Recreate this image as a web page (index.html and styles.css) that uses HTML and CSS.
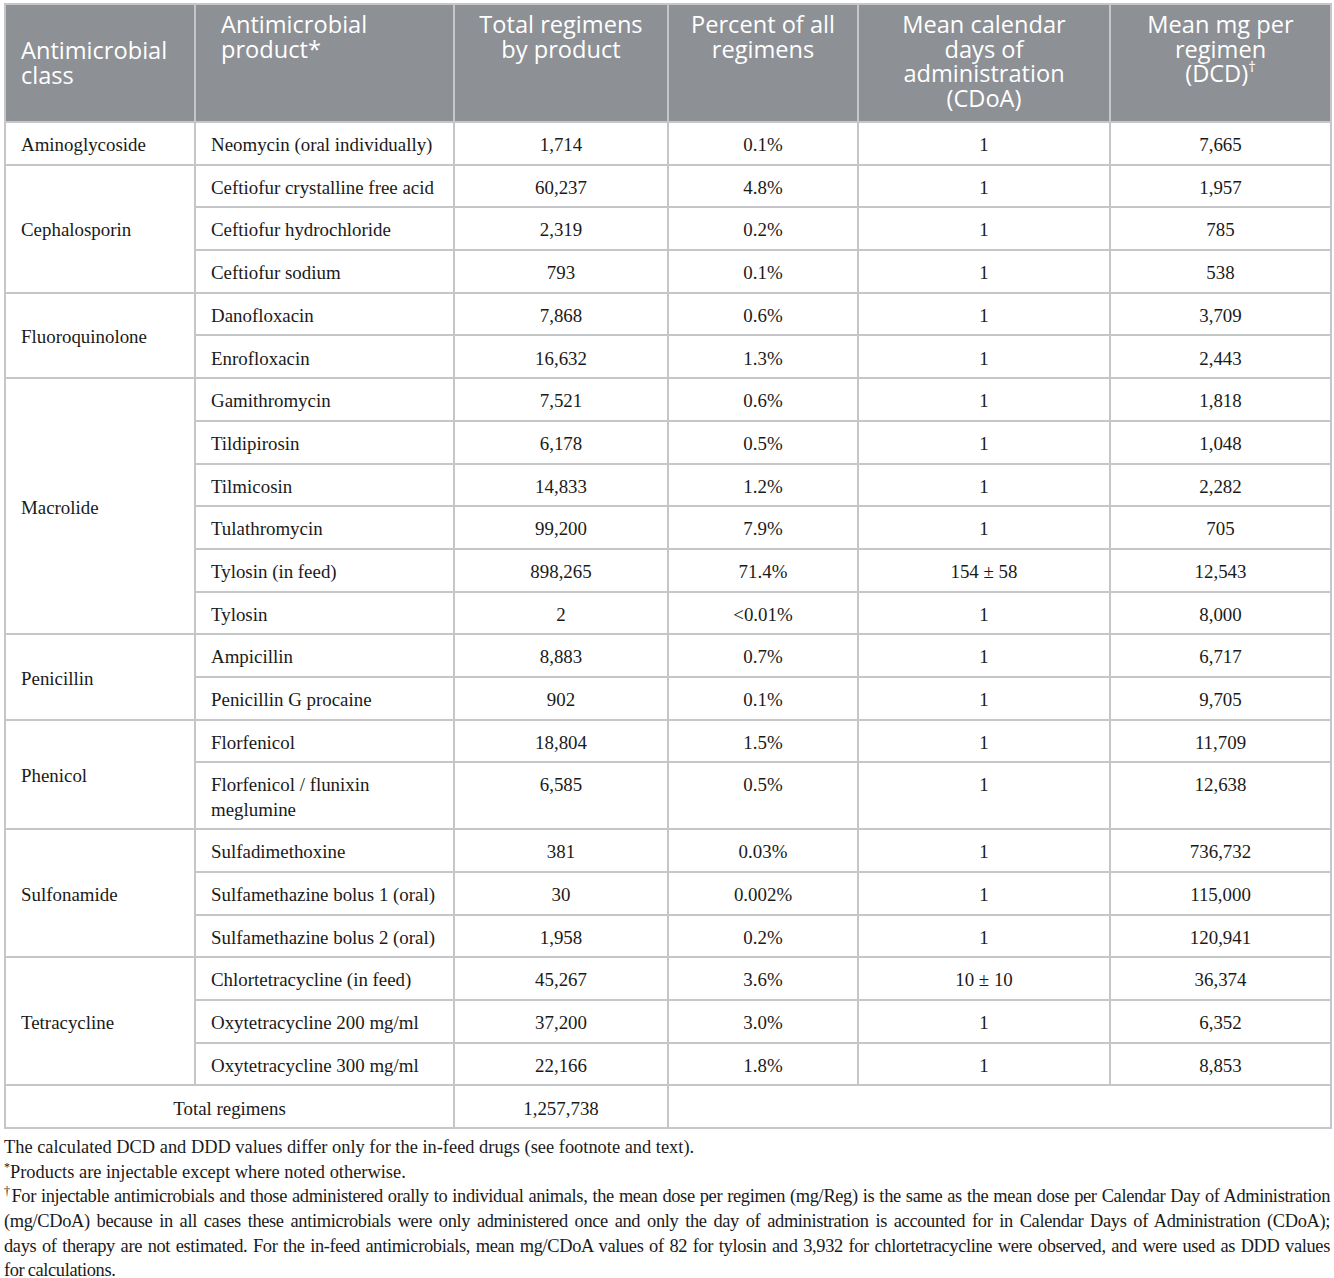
FILE: index.html
```html
<!DOCTYPE html>
<html>
<head>
<meta charset="utf-8">
<link rel="stylesheet" href="styles.css">
</head>
<body>
<div class="wrap">
<table class="tbl">
  <colgroup>
    <col class="c1"><col class="c2"><col class="c3"><col class="c4"><col class="c5"><col class="c6">
  </colgroup>
  <thead>
    <tr>
      <th class="left mid">Antimicrobial<br>class</th>
      <th class="left prodh">Antimicrobial<br>product*</th>
      <th>Total regimens<br>by product</th>
      <th>Percent of all<br>regimens</th>
      <th>Mean calendar<br>days of<br>administration<br>(CDoA)</th>
      <th>Mean mg per<br>regimen<br>(DCD)<sup>†</sup></th>
    </tr>
  </thead>
  <tbody>
    <tr><td class="cls">Aminoglycoside</td><td class="prod">Neomycin (oral individually)</td><td>1,714</td><td>0.1%</td><td>1</td><td>7,665</td></tr>

    <tr><td class="cls" rowspan="3">Cephalosporin</td><td class="prod">Ceftiofur crystalline free acid</td><td>60,237</td><td>4.8%</td><td>1</td><td>1,957</td></tr>
    <tr><td class="prod">Ceftiofur hydrochloride</td><td>2,319</td><td>0.2%</td><td>1</td><td>785</td></tr>
    <tr><td class="prod">Ceftiofur sodium</td><td>793</td><td>0.1%</td><td>1</td><td>538</td></tr>

    <tr><td class="cls" rowspan="2">Fluoroquinolone</td><td class="prod">Danofloxacin</td><td>7,868</td><td>0.6%</td><td>1</td><td>3,709</td></tr>
    <tr><td class="prod">Enrofloxacin</td><td>16,632</td><td>1.3%</td><td>1</td><td>2,443</td></tr>

    <tr><td class="cls" rowspan="6">Macrolide</td><td class="prod">Gamithromycin</td><td>7,521</td><td>0.6%</td><td>1</td><td>1,818</td></tr>
    <tr><td class="prod">Tildipirosin</td><td>6,178</td><td>0.5%</td><td>1</td><td>1,048</td></tr>
    <tr><td class="prod">Tilmicosin</td><td>14,833</td><td>1.2%</td><td>1</td><td>2,282</td></tr>
    <tr><td class="prod">Tulathromycin</td><td>99,200</td><td>7.9%</td><td>1</td><td>705</td></tr>
    <tr><td class="prod">Tylosin (in feed)</td><td>898,265</td><td>71.4%</td><td>154 ± 58</td><td>12,543</td></tr>
    <tr><td class="prod">Tylosin</td><td>2</td><td>&lt;0.01%</td><td>1</td><td>8,000</td></tr>

    <tr><td class="cls" rowspan="2">Penicillin</td><td class="prod">Ampicillin</td><td>8,883</td><td>0.7%</td><td>1</td><td>6,717</td></tr>
    <tr><td class="prod">Penicillin G procaine</td><td>902</td><td>0.1%</td><td>1</td><td>9,705</td></tr>

    <tr><td class="cls" rowspan="2">Phenicol</td><td class="prod">Florfenicol</td><td>18,804</td><td>1.5%</td><td>1</td><td>11,709</td></tr>
    <tr><td class="prod top">Florfenicol / flunixin<br>meglumine</td><td class="top">6,585</td><td class="top">0.5%</td><td class="top">1</td><td class="top">12,638</td></tr>

    <tr><td class="cls" rowspan="3">Sulfonamide</td><td class="prod">Sulfadimethoxine</td><td>381</td><td>0.03%</td><td>1</td><td>736,732</td></tr>
    <tr><td class="prod">Sulfamethazine bolus 1 (oral)</td><td>30</td><td>0.002%</td><td>1</td><td>115,000</td></tr>
    <tr><td class="prod">Sulfamethazine bolus 2 (oral)</td><td>1,958</td><td>0.2%</td><td>1</td><td>120,941</td></tr>

    <tr><td class="cls" rowspan="3">Tetracycline</td><td class="prod">Chlortetracycline (in feed)</td><td>45,267</td><td>3.6%</td><td>10 ± 10</td><td>36,374</td></tr>
    <tr><td class="prod">Oxytetracycline 200 mg/ml</td><td>37,200</td><td>3.0%</td><td>1</td><td>6,352</td></tr>
    <tr><td class="prod">Oxytetracycline 300 mg/ml</td><td>22,166</td><td>1.8%</td><td>1</td><td>8,853</td></tr>

    <tr><td colspan="2">Total regimens</td><td>1,257,738</td><td colspan="3"></td></tr>
  </tbody>
</table>
<div class="notes">
  <p>The calculated DCD and DDD values differ only for the in-feed drugs (see footnote and text).</p>
  <p><sup>*</sup>Products are injectable except where noted otherwise.</p>
  <p class="just">
    <span class="ln"><sup>†</sup>For injectable antimicrobials and those administered orally to individual animals, the mean dose per regimen (mg/Reg) is the same as the mean dose per Calendar Day of Administration</span>
    <span class="ln">(mg/CDoA) because in all cases these antimicrobials were only administered once and only the day of administration is accounted for in Calendar Days of Administration (CDoA);</span>
    <span class="ln">days of therapy are not estimated. For the in-feed antimicrobials, mean mg/CDoA values of 82 for tylosin and 3,932 for chlortetracycline were observed, and were used as DDD values</span>
    <span class="ln last">for calculations.</span>
  </p>
</div>
</div>
</body>
</html>
```

FILE: styles.css
```css
html, body {
  margin: 0;
  padding: 0;
  background: #ffffff;
}
.wrap {
  padding: 3px 4px 0 4px;
}
.tbl {
  width: 1326px;
  border-collapse: collapse;
  table-layout: fixed;
  font-family: "Liberation Serif", "Times New Roman", serif;
  font-size: 18.9px;
  color: #1a1a1a;
}
.c1 { width: 190px; }
.c2 { width: 259px; }
.c3 { width: 214px; }
.c4 { width: 190px; }
.c5 { width: 252px; }
.c6 { width: 221px; }
.tbl th {
  background: #8d9095;
  color: #ffffff;
  font-family: "Open Sans", "Lato", sans-serif;
  font-weight: 400;
  font-size: 23.6px;
  line-height: 24.5px;
  text-align: center;
  vertical-align: top;
  padding: 7px 10px 8px 10px;
  border: 2px solid #c4c6c8;
  height: 101px;
}
.tbl th.left {
  text-align: left;
  padding-left: 15px;
}
.tbl th.prodh {
  padding-left: 25px;
}
.tbl th.mid {
  vertical-align: middle;
  padding-top: 7px;
  padding-bottom: 8px;
}
.tbl th sup {
  font-size: 15px;
  line-height: 0;
  vertical-align: 10px;
}
.tbl td {
  border: 2px solid #c4c6c8;
  text-align: center;
  vertical-align: middle;
  line-height: 24.5px;
  padding: 10px 15px 6px 15px;
  height: 24.7px;
}
.tbl td.cls,
.tbl td.prod {
  text-align: left;
}
.tbl td.top {
  vertical-align: top;
}
.notes {
  font-family: "Liberation Serif", "Times New Roman", serif;
  font-size: 18.4px;
  line-height: 24.6px;
  color: #1a1a1a;
  padding-top: 6px;
}
.notes p {
  margin: 0;
}
.notes sup {
  font-size: 12px;
  line-height: 0;
  vertical-align: 7px;
}
.notes .just .ln {
  display: block;
  white-space: nowrap;
  text-align: justify;
  text-align-last: justify;
  letter-spacing: -0.35px;
  word-spacing: -1px;
}
.notes .just .ln.last {
  text-align-last: left;
}
```
